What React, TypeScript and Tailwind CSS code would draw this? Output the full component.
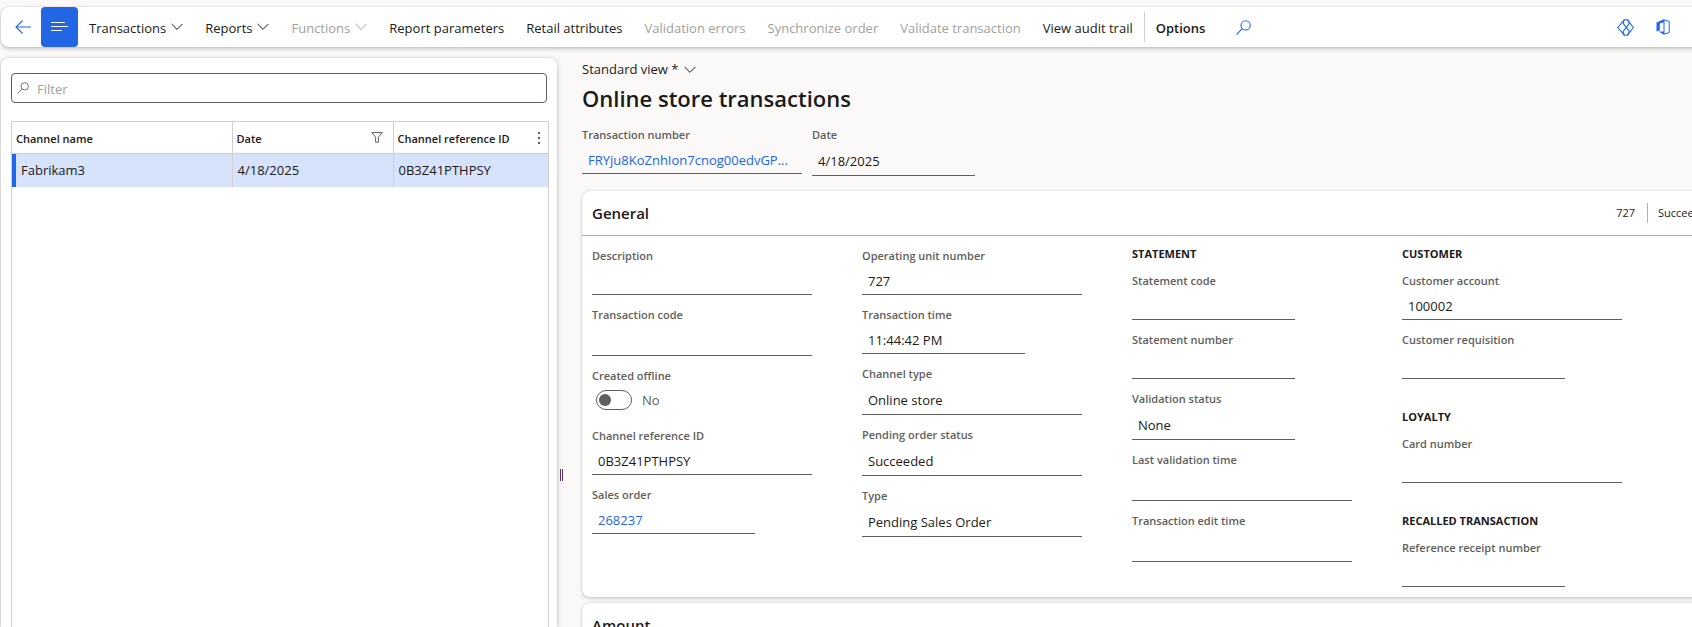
import React, { useId } from "react";

function Chevron({ className = "" }: { className?: string }) {
  return (
    <svg width="12" height="8" viewBox="0 0 12 8" fill="none" stroke="currentColor" strokeWidth="1" className={className} aria-hidden="true">
      <path d="M0.6 1 L6 6.4 L11.4 1" />
    </svg>
  );
}

function SearchIcon({ size }: { size: number }) {
  return (
    <svg width={size} height={size} viewBox="0 0 15 15" fill="none" stroke="currentColor" strokeWidth="1.1" aria-hidden="true">
      <circle cx="9.6" cy="5.4" r="4.6" />
      <path d="M6.3 8.7 L0.6 14.4" />
    </svg>
  );
}

function CommandButton({ label, menu, disabled }: { label: string; menu?: boolean; disabled?: boolean }) {
  return (
    <button
      type="button"
      disabled={disabled}
      className="flex h-10 shrink-0 items-center gap-[5px] px-[11px] text-[13px] whitespace-nowrap text-[#1b1a19] disabled:text-[#a19f9d]"
    >
      <span className="pt-[3px]">{label}</span>
      {menu && <Chevron />}
    </button>
  );
}

type FieldProps = { label: string; value?: string; short?: boolean; tall?: boolean; link?: boolean };

function Field({ label, value = "", short, tall, link }: FieldProps) {
  const id = useId();
  const box = `block border-b border-[#605e5c] px-[6px] text-[13px] ${short ? "w-[163px]" : "w-[220px]"} ${tall ? "h-[33px] pt-1" : "h-[31px] pt-[3px]"}`;
  return (
    <div className="flex flex-col">
      <label htmlFor={link ? undefined : id} id={`${id}-label`} className="text-[11px] leading-4 font-semibold whitespace-nowrap text-[#605e5c]">
        {label}
      </label>
      {link ? (
        <a id={id} href="#record" aria-labelledby={`${id}-label`} className={`${box} leading-7 whitespace-nowrap text-[#2266e3]`}>
          {value}
        </a>
      ) : (
        <input id={id} type="text" defaultValue={value} className={`${box} bg-transparent text-[#1b1a19] outline-none`} />
      )}
    </div>
  );
}

function Toggle({ label }: { label: string }) {
  return (
    <div className="flex h-12 flex-col">
      <label htmlFor="created-offline" className="text-[11px] leading-4 font-semibold text-[#605e5c]">
        {label}
      </label>
      <div className="flex items-center gap-[10px] pt-[5px] pl-1">
        <input
          id="created-offline"
          type="checkbox"
          role="switch"
          className="h-5 w-9 appearance-none rounded-full border border-[#605e5c] bg-white px-[2px] py-[3px] before:block before:size-3 before:rounded-full before:bg-[#605e5c] checked:before:ml-4"
        />
        <span className="pt-px text-[13px] leading-5 text-[#605e5c]">No</span>
      </div>
    </div>
  );
}

function Group({ title, children }: { title: string; children: React.ReactNode }) {
  return (
    <section className="flex flex-col gap-[11px]">
      <h3 className="text-[11px] leading-4 font-bold whitespace-nowrap text-[#1b1a19]">{title}</h3>
      <div className="flex flex-col gap-3">{children}</div>
    </section>
  );
}

function CommandBar() {
  return (
    <header className="z-10 -mr-2 ml-px flex h-10 shrink-0 items-center rounded-lg bg-white pr-[30px] shadow-[0_0_2px_rgba(0,0,0,0.15),0_2px_4px_rgba(0,0,0,0.2)]">
      <button type="button" aria-label="Back" className="flex h-10 w-10 shrink-0 items-center justify-end pr-[10px] text-[#2266e3]">
        <svg width="16" height="14" viewBox="0 0 16 14" fill="none" stroke="currentColor" strokeWidth="1.1" aria-hidden="true">
          <path d="M7.6 0.5 L1 7 L7.6 13.5 M1 7 H16" />
        </svg>
      </button>
      <button type="button" aria-label="Show list" className="flex h-10 w-[37px] shrink-0 items-center justify-center rounded bg-[#2266e3] text-white">
        <svg width="17" height="10" viewBox="0 0 17 10" stroke="currentColor" strokeWidth="1" aria-hidden="true">
          <path d="M0 0.5 H14 M0 4.5 H17 M0 8.5 H11" />
        </svg>
      </button>
      <nav aria-label="Actions" className="flex items-center">
        <CommandButton label="Transactions" menu />
        <CommandButton label="Reports" menu />
        <CommandButton label="Functions" menu disabled />
        <CommandButton label="Report parameters" />
        <CommandButton label="Retail attributes" />
        <CommandButton label="Validation errors" disabled />
        <CommandButton label="Synchronize order" disabled />
        <CommandButton label="Validate transaction" disabled />
        <CommandButton label="View audit trail" />
        <button type="button" className="h-[30px] border-l border-[#d2d0ce] px-[11px] pt-[3px] text-[13px] font-semibold text-[#1b1a19]">
          Options
        </button>
      </nav>
      <button type="button" aria-label="Search" className="ml-5 text-[#2266e3]">
        <SearchIcon size={15} />
      </button>
      <div className="ml-auto flex items-center gap-[22px] text-[#2266e3]">
        <button type="button" aria-label="Power Apps">
          <svg width="17" height="17" viewBox="0 0 17 17" fill="none" stroke="currentColor" strokeWidth="1.1" strokeLinejoin="round" aria-hidden="true">
            <path d="M7.2 0.8 H10.6 L16.3 8.5 L10.6 16.2 H7.2 L0.8 8.5 Z" />
            <path d="M7.2 0.8 L6.2 4.4 L12.4 12.4 L10.6 16.2 M10.6 0.8 L12.4 4.4 L6.2 12.4 L7.2 16.2" />
          </svg>
        </button>
        <button type="button" aria-label="Office">
          <svg width="14" height="16" viewBox="0 0 14 16" aria-hidden="true">
            <path fill="currentColor" d="M0.5 3.6 L8 0.2 V3.2 L3.8 4.4 V11.4 L0.5 12.6 Z M2.6 12.6 H8 V15.8 Z" />
            <path fill="none" stroke="currentColor" strokeWidth="1" d="M8 0.8 L13.2 2.4 V13.6 L8 15.2 Z" />
          </svg>
        </button>
      </div>
    </header>
  );
}

function ListPane() {
  return (
    <aside className="ml-px flex w-[556px] shrink-0 flex-col rounded-t-lg bg-white px-[10px] pt-[15px] shadow-[0_0_2px_rgba(0,0,0,0.15),0_2px_6px_rgba(0,0,0,0.2)]">
      <div className="flex h-[30px] shrink-0 items-center gap-2 rounded border border-[#605e5c] px-[5px] text-[#605e5c]">
        <SearchIcon size={12} />
        <input type="text" aria-label="Filter" placeholder="Filter" className="min-w-0 flex-1 pt-[3px] text-[13px] outline-none placeholder:text-[#a19f9d]" />
      </div>
      <div className="mt-[18px] -mr-[2px] flex-1 border border-b-0 border-[#d2d0ce]">
        <table className="w-full table-fixed border-collapse text-left text-[#1b1a19]">
          <colgroup>
            <col className="w-[220px]" />
            <col className="w-[161px]" />
            <col />
          </colgroup>
          <thead>
            <tr className="h-[31px] border-b border-[#d2d0ce] text-[11px]">
              <th className="border-r border-[#d2d0ce] px-1 py-0 pt-[3px] font-semibold">Channel name</th>
              <th className="border-r border-[#d2d0ce] px-1 py-0 pt-[3px] font-semibold">
                <span className="flex items-center justify-between pr-[6px]">
                  Date
                  <svg width="12" height="14" viewBox="0 0 12 14" fill="none" stroke="#605e5c" strokeWidth="1" aria-hidden="true">
                    <path d="M0.8 0.6 H11.2 L7.4 5.2 V10.2 H4.6 V5.2 Z" />
                  </svg>
                </span>
              </th>
              <th className="px-1 py-0 pt-[3px] font-semibold">
                <span className="flex items-center justify-between pr-1">
                  Channel reference ID
                  <svg width="2" height="14" viewBox="0 0 2 14" fill="#605e5c" aria-hidden="true">
                    <path d="M0 0h2v2H0z M0 5h2v2H0z M0 10h2v2H0z" />
                  </svg>
                </span>
              </th>
            </tr>
          </thead>
          <tbody>
            <tr className="h-[33px] bg-[#d7e2fb] text-[13px]">
              <td className="border-r border-[#d2d0ce] p-0">
                <span className="flex h-[33px] items-center border-l-4 border-[#2266e3] pt-[2px] pl-[5px]">Fabrikam3</span>
              </td>
              <td className="border-r border-[#d2d0ce] px-[5px] pt-[2px]">4/18/2025</td>
              <td className="px-[5px] pt-[2px]">0B3Z41PTHPSY</td>
            </tr>
          </tbody>
        </table>
      </div>
    </aside>
  );
}

export default function App() {
  return (
    <div className="flex h-screen flex-col overflow-hidden bg-[#faf9f8] pt-[7px] font-['Open_Sans','Noto_Sans',sans-serif] text-[#1b1a19]">
      <CommandBar />
      <div className="mt-[11px] flex min-h-0 flex-1">
        <ListPane />
        <div role="separator" aria-orientation="vertical" className="flex w-[23px] shrink-0 items-center pt-[265px] pl-[3px]">
          <span className="h-3 w-[3px] border-x border-[#5c3566]" />
        </div>
        <main className="min-w-0 flex-1 overflow-hidden pl-[2px]">
          <button type="button" className="flex h-6 items-center gap-[6px] text-[13px]">
            <span>Standard view *</span>
            <Chevron />
          </button>
          <h1 className="text-[22px] leading-8 font-semibold">Online store transactions</h1>
          <div className="mt-[13px] flex gap-[10px]">
            <Field label="Transaction number" value="FRYju8KoZnhIon7cnog00edvGP..." link />
            <Field label="Date" value="4/18/2025" short tall />
          </div>
          <section className="mt-[15px] -mr-[35px] rounded-lg bg-white shadow-[0_0_2px_rgba(0,0,0,0.2),0_2px_4px_rgba(0,0,0,0.15)]">
            <div className="flex h-[45px] items-center border-b border-[#b3b0ad] px-[10px]">
              <h2 className="text-[15px] font-semibold">General</h2>
              <div className="ml-auto flex items-center text-[11px] leading-5">
                <span className="pr-3">727</span>
                <span className="w-[70px] border-l border-[#b3b0ad] pl-[10px]">Succeeded</span>
              </div>
            </div>
            <div className="flex gap-[50px] px-[10px] py-[10px]">
              <div className="flex w-[220px] shrink-0 flex-col gap-3 pt-[2px]">
                <Field label="Description" />
                <Field label="Transaction code" tall />
                <Toggle label="Created offline" />
                <Field label="Channel reference ID" value="0B3Z41PTHPSY" />
                <Field label="Sales order" value="268237" short link />
              </div>
              <div className="flex w-[220px] shrink-0 flex-col gap-3 pt-[2px]">
                <Field label="Operating unit number" value="727" />
                <Field label="Transaction time" value="11:44:42 PM" short />
                <Field label="Channel type" value="Online store" tall />
                <Field label="Pending order status" value="Succeeded" tall />
                <Field label="Type" value="Pending Sales Order" tall />
              </div>
              <div className="w-[220px] shrink-0">
                <Group title="STATEMENT">
                  <Field label="Statement code" short />
                  <Field label="Statement number" short />
                  <Field label="Validation status" value="None" short tall />
                  <Field label="Last validation time" tall />
                  <Field label="Transaction edit time" tall />
                </Group>
              </div>
              <div className="flex w-[220px] shrink-0 flex-col gap-[30px]">
                <Group title="CUSTOMER">
                  <Field label="Customer account" value="100002" />
                  <Field label="Customer requisition" short />
                </Group>
                <Group title="LOYALTY">
                  <Field label="Card number" />
                </Group>
                <Group title="RECALLED TRANSACTION">
                  <Field label="Reference receipt number" short />
                </Group>
              </div>
            </div>
          </section>
          <section className="mt-[6px] -mr-[35px] rounded-lg bg-white shadow-[0_0_2px_rgba(0,0,0,0.2),0_2px_4px_rgba(0,0,0,0.15)]">
            <div className="flex h-[45px] items-center border-b border-[#b3b0ad] px-[10px]">
              <h2 className="text-[15px] font-semibold">Amount</h2>
            </div>
          </section>
        </main>
      </div>
    </div>
  );
}
